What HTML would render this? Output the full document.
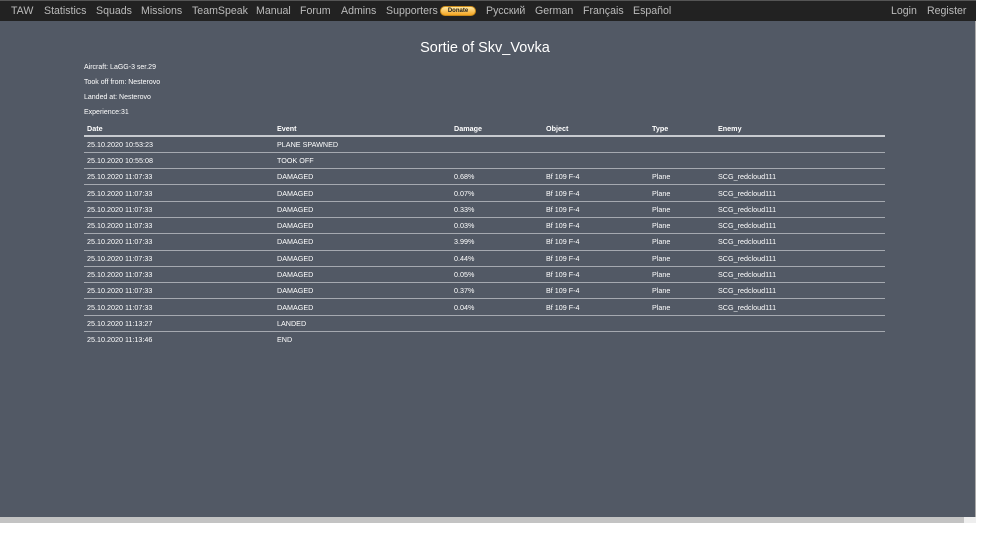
<!DOCTYPE html>
<html><head><style>
body{margin:0;width:1000px;height:547px;background:#fff;font-family:"Liberation Sans",Arial,sans-serif;overflow:hidden;position:relative}
#main{position:absolute;left:0;top:0;width:976px;height:517px;background:#525965;border-right:1px solid #aaa;box-sizing:border-box}
#nav{position:absolute;left:0;top:0;width:976px;height:21px;background:#222;border-top:1px solid #555;box-sizing:border-box}
#nav span{position:absolute;top:4px;font-size:10.6px;color:#bbb;white-space:nowrap}
.don{position:absolute;left:440px;top:5px;width:36px;height:10px;border-radius:5px;background:linear-gradient(#ffe7a0,#f5a623);border:1px solid #c98a1a;box-sizing:border-box;font-size:6px;color:#222;text-align:center;line-height:9px;font-weight:bold}
h1{position:absolute;left:0;width:970px;top:40px;margin:0;text-align:center;font-weight:normal;font-size:14.5px;color:#fff}
.info{position:absolute;left:84px;font-size:7px;color:#fff}
table{position:absolute;left:84px;top:122px;width:801px;border-collapse:collapse;font-size:7.2px;color:#fff}
td,th{height:15.3px;padding:0 0 0 3px;text-align:left;border-bottom:1px solid #a5a9b0;white-space:nowrap}
th{font-weight:bold;border-bottom:2px solid #c8cbd0;height:12.5px}
tr:last-child td{border-bottom:none}
#sb{position:absolute;left:0;top:517px;width:976px;height:6px;background:#c3c3c3}
#sb i{position:absolute;right:0;top:0;width:12px;height:6px;background:#eee}
</style></head><body>
<div id="main">
<div id="nav">
<span style="left:11px">TAW</span><span style="left:44px">Statistics</span><span style="left:96px">Squads</span><span style="left:141px">Missions</span><span style="left:192px">TeamSpeak</span><span style="left:256px">Manual</span><span style="left:300px">Forum</span><span style="left:341px">Admins</span><span style="left:386px">Supporters</span>
<div class="don">Donate</div>
<span style="left:486px">Русский</span><span style="left:535px">German</span><span style="left:583px">Français</span><span style="left:633px">Español</span>
<span style="left:891px">Login</span><span style="left:927px">Register</span>
</div>
<h1>Sortie of Skv_Vovka</h1>
<div class="info" style="top:64px">Aircraft: LaGG-3 ser.29</div>
<div class="info" style="top:79px">Took off from: Nesterovo</div>
<div class="info" style="top:94px">Landed at: Nesterovo</div>
<div class="info" style="top:109px">Experience:31</div>
<table>
<colgroup><col style="width:190px"><col style="width:177px"><col style="width:92px"><col style="width:106px"><col style="width:66px"><col></colgroup>
<tr><th>Date</th><th>Event</th><th>Damage</th><th>Object</th><th>Type</th><th>Enemy</th></tr>
<tr><td>25.10.2020 10:53:23</td><td>PLANE SPAWNED</td><td></td><td></td><td></td><td></td></tr>
<tr><td>25.10.2020 10:55:08</td><td>TOOK OFF</td><td></td><td></td><td></td><td></td></tr>
<tr><td>25.10.2020 11:07:33</td><td>DAMAGED</td><td>0.68%</td><td>Bf 109 F-4</td><td>Plane</td><td>SCG_redcloud111</td></tr>
<tr><td>25.10.2020 11:07:33</td><td>DAMAGED</td><td>0.07%</td><td>Bf 109 F-4</td><td>Plane</td><td>SCG_redcloud111</td></tr>
<tr><td>25.10.2020 11:07:33</td><td>DAMAGED</td><td>0.33%</td><td>Bf 109 F-4</td><td>Plane</td><td>SCG_redcloud111</td></tr>
<tr><td>25.10.2020 11:07:33</td><td>DAMAGED</td><td>0.03%</td><td>Bf 109 F-4</td><td>Plane</td><td>SCG_redcloud111</td></tr>
<tr><td>25.10.2020 11:07:33</td><td>DAMAGED</td><td>3.99%</td><td>Bf 109 F-4</td><td>Plane</td><td>SCG_redcloud111</td></tr>
<tr><td>25.10.2020 11:07:33</td><td>DAMAGED</td><td>0.44%</td><td>Bf 109 F-4</td><td>Plane</td><td>SCG_redcloud111</td></tr>
<tr><td>25.10.2020 11:07:33</td><td>DAMAGED</td><td>0.05%</td><td>Bf 109 F-4</td><td>Plane</td><td>SCG_redcloud111</td></tr>
<tr><td>25.10.2020 11:07:33</td><td>DAMAGED</td><td>0.37%</td><td>Bf 109 F-4</td><td>Plane</td><td>SCG_redcloud111</td></tr>
<tr><td>25.10.2020 11:07:33</td><td>DAMAGED</td><td>0.04%</td><td>Bf 109 F-4</td><td>Plane</td><td>SCG_redcloud111</td></tr>
<tr><td>25.10.2020 11:13:27</td><td>LANDED</td><td></td><td></td><td></td><td></td></tr>
<tr><td>25.10.2020 11:13:46</td><td>END</td><td></td><td></td><td></td><td></td></tr>
</table>
</div>
<div id="sb"><i></i></div>
</body></html>
